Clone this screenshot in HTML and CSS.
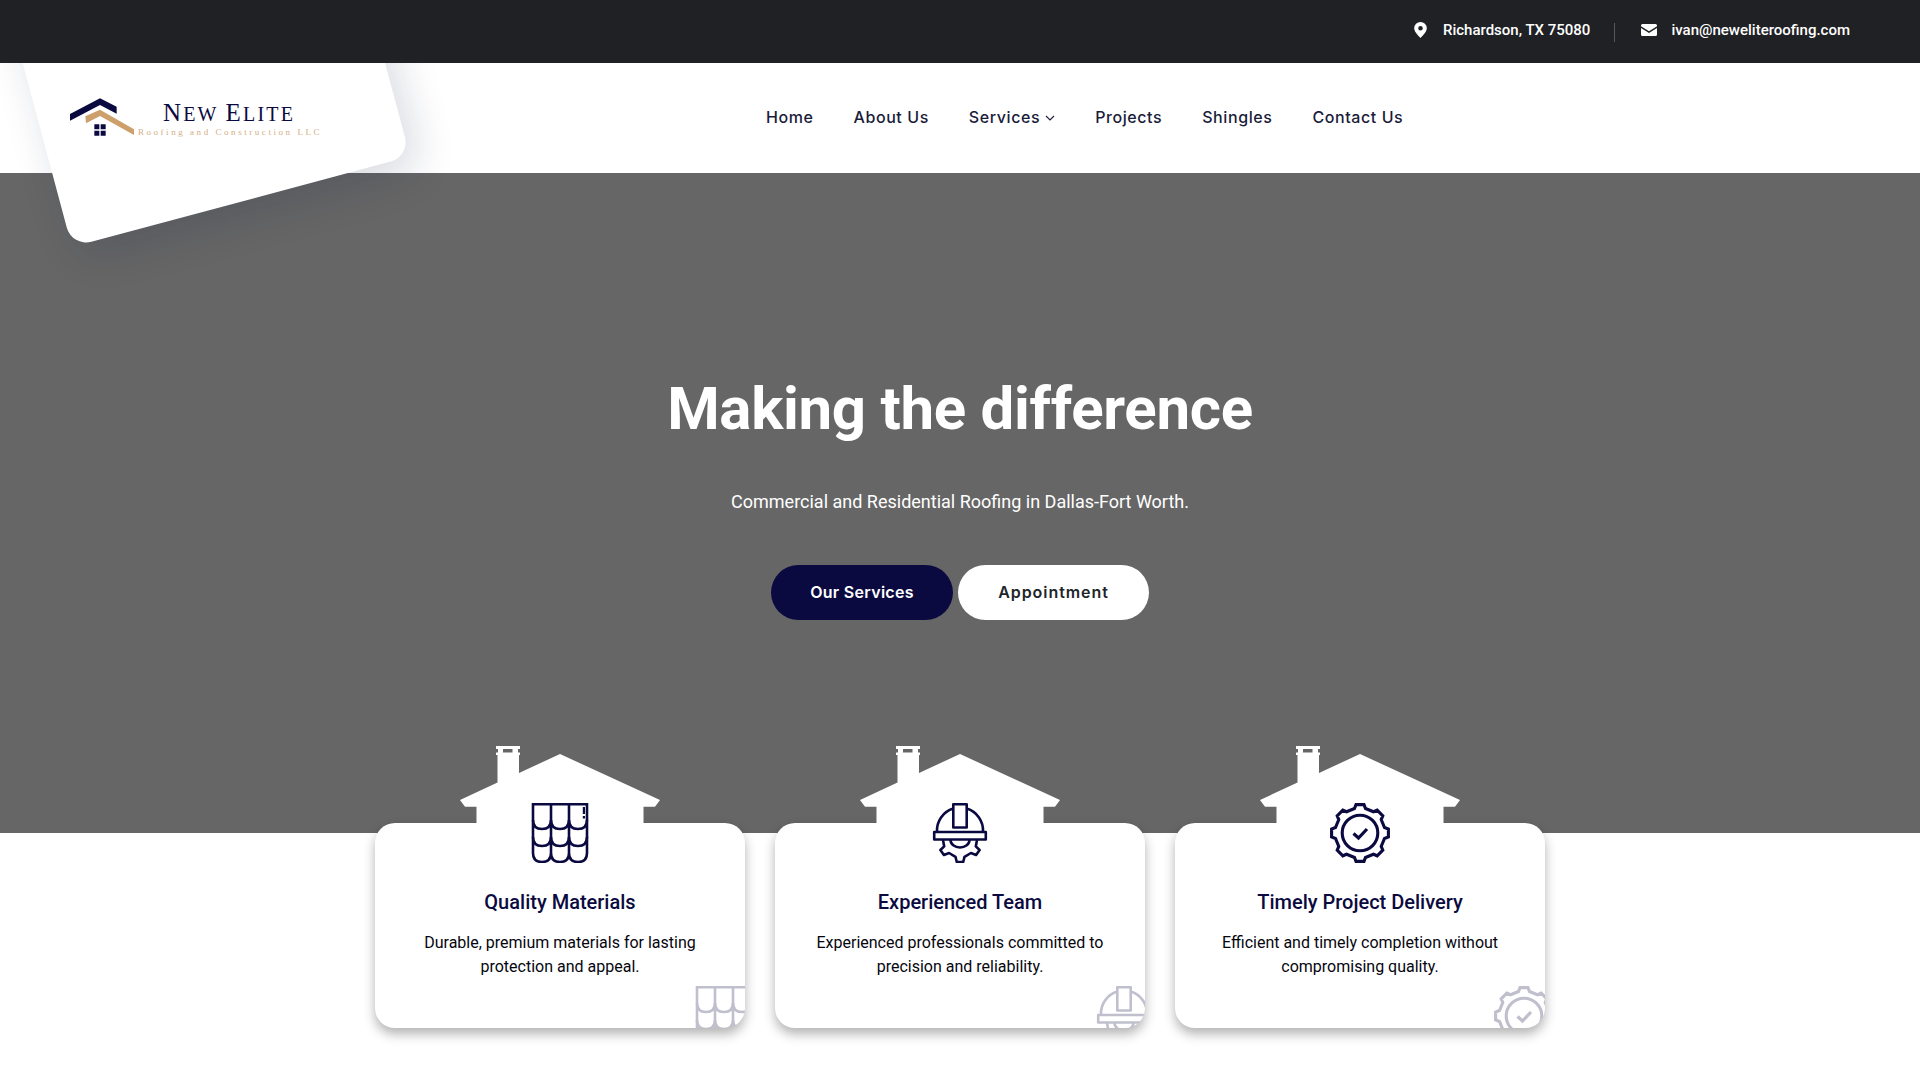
FILE: index.html
```html
<!DOCTYPE html>
<html lang="en">
<head>
<meta charset="utf-8">
<title>New Elite Roofing and Construction LLC</title>
<link rel="stylesheet" href="styles.css">
</head>
<body>
<svg class="defs" width="0" height="0" aria-hidden="true">
  <symbol id="house" viewBox="0 0 200 77">
    <path fill-rule="evenodd" d="M0 54 37.5 36.5V9H36V6.5H38V3H36V0H60V3H58V6.5H60V9H59V27L100 8 200 54 195 60.7H183.5V77H16.5V60.7H5ZM43 3V6.5H52.5V3Z"/>
  </symbol>
  <symbol id="roof" viewBox="0 0 60 60">
    <g fill="none" stroke="currentColor" stroke-width="2.6">
      <path d="M3 50V1.3H57V50"/>
      <path d="M21 1.3V50M39 1.3V50"/>
      <path d="M3 17Q3 26 12 26T21 17Q21 26 30 26T39 17Q39 26 48 26T57 17"/>
      <path d="M3 34Q3 43 12 43T21 34Q21 43 30 43T39 34Q39 43 48 43T57 34"/>
      <path d="M3 50Q3 59 12 59T21 50Q21 59 30 59T39 50Q39 59 48 59T57 50"/>
    </g>
    <path fill="currentColor" d="M52.8 4H55V11H52.8ZM52.8 13H55V15.5H52.8Z"/>
  </symbol>
  <symbol id="helmet" viewBox="0 0 60 60">
    <g fill="none" stroke="currentColor" stroke-width="2.6" stroke-linejoin="round">
      <path d="M23.3 5.5A23 23 0 0 0 7 29M36.7 5.500A23 23 0 0 1 53 29"/>
      <path d="M23.3 1.3H36.7V24.5H23.3Z"/>
      <path d="M4.2 29H55.8V36.5H4.2Z"/>
      <path d="M47 37 45.8 43.4 49.6 47 46.1 52 40.9 50 34.5 53.9 33.2 59H26.8L25.500 53.9 19.1 50 13.9 52 10.4 47 14.2 43.4 13 37"/>
      <path d="M20.5 37A9.5 7.5 0 0 0 39.5 37"/>
    </g>
  </symbol>
  <symbol id="gear" viewBox="-30 -30 60 60">
    <g fill="none" stroke="currentColor" stroke-width="3.1">
      <polygon points="-5.5,-24.5 -4,-28.4 4,-28.4 5.5,-24.5 13.44,-21.21 17.2,-22.8 22.8,-17.2 21.21,-13.44 24.5,-5.5 28.4,-4 28.4,4 24.5,5.5 21.21,13.44 22.8,17.2 17.2,22.8 13.44,21.21 5.5,24.5 4,28.4 -4,28.4 -5.5,24.5 -13.44,21.21 -17.2,22.8 -22.8,17.2 -21.21,13.44 -24.5,5.5 -28.4,4 -28.4,-4 -24.5,-5.5 -21.21,-13.44 -22.8,-17.2 -17.2,-22.8 -13.44,-21.21"/>
      <circle r="17.8"/>
      <path stroke-width="3.2" d="M-6.5 .5-1.5 5 7-4"/>
    </g>
  </symbol>
</svg>

<div class="topbar">
  <div class="contact">
    <svg class="pin" viewBox="0 0 13 16"><path fill="#fff" fill-rule="evenodd" d="M6.500 0A6.300 6.300 0 0 0 .2 6.300C.2 9.800 4.200 13.600 6.500 16 8.800 13.600 12.800 9.800 12.800 6.300A6.300 6.300 0 0 0 6.500 0ZM6.500 4A2.300 2.300 0 1 1 6.500 8.600 2.300 2.300 0 0 1 6.500 4Z"/></svg>
    <span>Richardson, TX 75080</span>
  </div>
  <div class="divider"></div>
  <div class="contact">
    <svg class="mail" viewBox="0 0 16 12"><path fill="#fff" d="M1.500 0H14.500A1.500 1.500 0 0 1 16 1.500V2.200L8 7.300 0 2.200V1.500A1.500 1.500 0 0 1 1.500 0ZM0 4 8 9 16 4V10.500A1.500 1.500 0 0 1 14.500 12H1.500A1.500 1.500 0 0 1 0 10.500Z"/></svg>
    <span>ivan@neweliteroofing.com</span>
  </div>
</div>

<header class="header">
  <div class="logo-card"></div>
  <a class="logo">
    <svg class="logo-mark" viewBox="30 25 192 112">
      <path fill="#0b0a40" d="M30 72 120 25 170 50V71L120 45 30 92Z"/>
      <path fill="#cc9f6b" d="M76 79 120 59 222 118V135L120 78 78 100Z"/>
      <path fill="#0b0a40" d="M103 103H118V118H103ZM122 103H137V118H122ZM103 122H118V137H103ZM122 122H137V137H122Z"/>
    </svg>
    <span class="logo-text">
      <span class="logo-name"><span class="logo-cap">N</span>ew <span class="logo-cap">E</span>lite</span>
      <span class="logo-tag">Roofing and Construction LLC</span>
    </span>
  </a>
  <nav class="nav">
    <a>Home</a>
    <a>About Us</a>
    <a class="has-sub">Services<svg class="chev" viewBox="0 0 10 6"><path d="M1 1 5 5 9 1"/></svg></a>
    <a>Projects</a>
    <a>Shingles</a>
    <a>Contact Us</a>
  </nav>
</header>

<section class="hero">
  <h1>Making the difference</h1>
  <p>Commercial and Residential Roofing in Dallas-Fort Worth.</p>
  <div class="actions">
    <a class="btn btn-primary">Our Services</a>
    <a class="btn btn-light">Appointment</a>
  </div>
</section>

<section class="features">
  <article class="feature">
    <svg class="house"><use href="#house"/></svg>
    <div class="card">
      <svg class="icon"><use href="#roof"/></svg>
      <h3>Quality Materials</h3>
      <p>Durable, premium materials for lasting<br>protection and appeal.</p>
      <div class="ghost-clip"><svg class="icon-ghost"><use href="#roof"/></svg></div>
    </div>
  </article>
  <article class="feature">
    <svg class="house"><use href="#house"/></svg>
    <div class="card">
      <svg class="icon"><use href="#helmet"/></svg>
      <h3>Experienced Team</h3>
      <p>Experienced professionals committed to<br>precision and reliability.</p>
      <div class="ghost-clip"><svg class="icon-ghost"><use href="#helmet"/></svg></div>
    </div>
  </article>
  <article class="feature">
    <svg class="house"><use href="#house"/></svg>
    <div class="card">
      <svg class="icon"><use href="#gear"/></svg>
      <h3>Timely Project Delivery</h3>
      <p>Efficient and timely completion without<br>compromising quality.</p>
      <div class="ghost-clip"><svg class="icon-ghost"><use href="#gear"/></svg></div>
    </div>
  </article>
</section>
</body>
</html>
```
FILE: styles.css
```css
* { box-sizing: border-box; }
html, body { margin: 0; padding: 0; }
body {
  background: #fff;
  font-family: Roboto, "Liberation Sans", sans-serif;
  color: #0b0a40;
  overflow-x: hidden;
}
.defs { position: absolute; }

.topbar {
  position: relative;
  z-index: 3;
  height: 63px;
  background: #1f2124;
  display: flex;
  justify-content: flex-end;
  align-items: center;
  padding: 0 70px 4px 0;
  color: #fff;
  font-size: 15px;
  font-weight: 500;
}
.contact { display: flex; align-items: center; }
.pin { width: 13px; height: 16px; margin-right: 16px; }
.mail { width: 16px; height: 12px; margin-right: 14px; }
.divider {
  width: 1px;
  height: 19px;
  margin: 6px 26px 0 24px;
  background: #55575a;
}

.header {
  position: relative;
  z-index: 2;
  height: 110px;
  background: #fff;
  display: flex;
  align-items: center;
  padding-left: 70px;
}
.logo-card {
  position: absolute;
  left: 72px;
  top: -116px;
  width: 350px;
  height: 300px;
  background: #fff;
  border-radius: 20px;
  transform-origin: 0 100%;
  transform: rotate(-15deg);
  box-shadow: 8px 14px 40px rgba(20, 30, 70, .16);
}
.logo {
  position: relative;
  display: flex;
  align-items: flex-end;
  width: 250px;
  height: 38px;
  margin-top: -2px;
}
.logo-mark { width: 64px; height: 38px; flex: none; }
.logo-text {
  display: flex;
  flex-direction: column;
  align-items: center;
  margin-left: 4px;
  width: 182px;
}
.logo-name {
  font-family: "Liberation Serif", serif;
  text-transform: uppercase;
  font-size: 20px;
  line-height: 21px;
  letter-spacing: 2.2px;
  white-space: nowrap;
  color: #0b0a40;
  margin-bottom: -1px;
}
.logo-cap { font-size: 25px; }
.logo-tag {
  font-family: "Liberation Serif", serif;
  font-size: 9px;
  line-height: 9px;
  letter-spacing: 2.55px;
  white-space: nowrap;
  color: #d6ae82;
  margin-top: 4px;
  margin-bottom: -1px;
  margin-left: 2px;
}

.nav {
  position: relative;
  display: flex;
  gap: 40px;
  margin: -2px 0 0 446px;
  font-family: Inter, sans-serif;
  font-size: 16px;
  font-weight: 500;
  color: #1a1c3a;
}
.nav a { display: flex; align-items: center; white-space: nowrap; letter-spacing: .58px; }
.chev { width: 10px; height: 6px; margin-left: 5px; margin-top: 2px; }
.chev path { fill: none; stroke: #1a1c3a; stroke-width: 1.1; }

.hero {
  position: relative;
  height: 660px;
  background: #666;
  padding-top: 200px;
  display: flex;
  flex-direction: column;
  align-items: center;
  color: #fff;
}
.hero h1 {
  margin: 0;
  font-size: 60px;
  line-height: 72px;
  font-weight: 700;
  letter-spacing: -.3px;
}
.hero p {
  margin: 45px 0 0;
  font-size: 18px;
  line-height: 24px;
}
.actions { display: flex; gap: 5px; margin-top: 51px; }
.btn {
  display: flex;
  align-items: center;
  justify-content: center;
  height: 55px;
  padding-bottom: 2px;
  border-radius: 28px;
  font-family: Inter, sans-serif;
  font-size: 16px;
  font-weight: 600;
  letter-spacing: .3px;
}
.btn-primary { width: 182px; background: #0b0a40; color: #fff; }
.btn-light { width: 191px; background: #fff; color: #212529; letter-spacing: .95px; }

.features {
  position: relative;
  z-index: 1;
  width: 1170px;
  margin: -87px auto 0;
  padding-bottom: 52px;
  display: grid;
  grid-template-columns: repeat(3, 370px);
  gap: 30px;
}
.feature { display: flex; flex-direction: column; align-items: center; }
.house {
  position: relative;
  z-index: 1;
  display: block;
  width: 200px;
  height: 77px;
  fill: #fff;
}
.card {
  position: relative;
  width: 100%;
  height: 205px;
  background: #fff;
  border-radius: 20px;
  box-shadow: 0 6px 12px rgba(0, 0, 0, .3);
  text-align: center;
  padding: 0 20px;
}
.icon {
  position: relative;
  z-index: 2;
  display: block;
  width: 60px;
  height: 60px;
  margin: -20px auto 0;
  color: #0b0a40;
}
.card h3 {
  margin: 25px 0 0;
  font-size: 20px;
  line-height: 28px;
  font-weight: 500;
  color: #0b0a40;
}
.card p {
  margin: 15px 0 0;
  font-size: 16px;
  line-height: 24px;
  color: #06060f;
}
.ghost-clip {
  position: absolute;
  inset: 0;
  overflow: hidden;
  border-radius: 20px;
  pointer-events: none;
}
.icon-ghost {
  position: absolute;
  right: -9px;
  bottom: -18px;
  width: 60px;
  height: 60px;
  color: #0b0a40;
  opacity: .26;
}
```
